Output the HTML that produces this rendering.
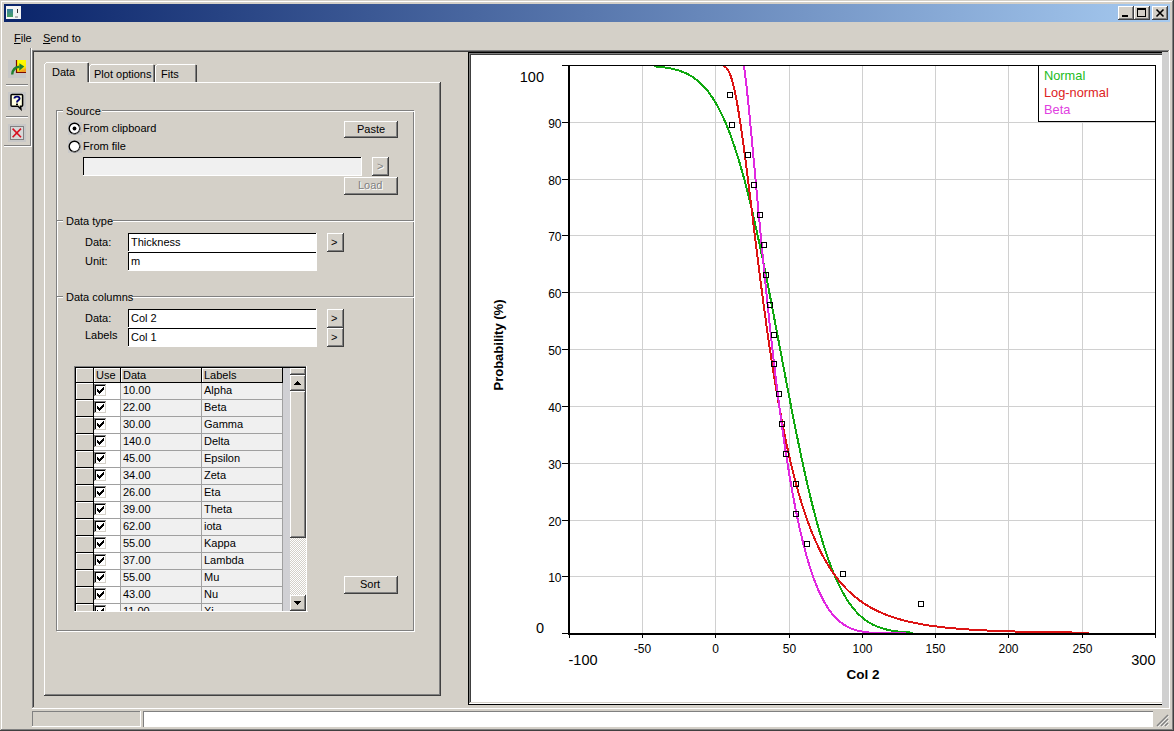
<!DOCTYPE html>
<html><head><meta charset="utf-8"><style>
html,body{margin:0;padding:0;width:1174px;height:731px;overflow:hidden;background:#D4D0C8;}
body{position:relative;font-family:"Liberation Sans",sans-serif;}
div,svg,span{position:absolute;}
svg{overflow:visible;}
.t{white-space:nowrap;line-height:0;height:0;display:block;}
u{text-decoration:underline;}
</style></head><body>
<div style="left:0px;top:0px;width:1174px;height:731px;background:#D4D0C8;"></div>
<div style="left:1px;top:1px;width:1172px;height:1px;background:#FFFFFF;"></div>
<div style="left:1px;top:1px;width:1px;height:729px;background:#FFFFFF;"></div>
<div style="left:0px;top:730px;width:1174px;height:1px;background:#404040;"></div>
<div style="left:1173px;top:0px;width:1px;height:731px;background:#404040;"></div>
<div style="left:1px;top:729px;width:1172px;height:1px;background:#808080;"></div>
<div style="left:1172px;top:1px;width:1px;height:729px;background:#808080;"></div>
<div style="left:4px;top:4px;width:1166px;height:18px;background:linear-gradient(to right,#0A246A,#A6CAF0);"></div>
<div style="left:6px;top:6px;width:15px;height:13px;background:#F4F4F4;"></div>
<div style="left:7px;top:9px;width:6px;height:8px;background:#3D8F7A;background:linear-gradient(#3a7fa0,#48a060);"></div>
<div style="left:15px;top:16px;width:3px;height:2px;background:#B8B8B8;"></div>
<div style="left:17px;top:9px;width:1px;height:4px;background:#303030;"></div>
<div style="left:1118px;top:6px;width:16px;height:14px;background:#D4D0C8;"></div>
<div style="left:1118px;top:19px;width:16px;height:1px;background:#404040;"></div>
<div style="left:1133px;top:6px;width:1px;height:14px;background:#404040;"></div>
<div style="left:1118px;top:6px;width:15px;height:1px;background:#FFFFFF;"></div>
<div style="left:1118px;top:6px;width:1px;height:13px;background:#FFFFFF;"></div>
<div style="left:1119px;top:18px;width:14px;height:1px;background:#808080;"></div>
<div style="left:1132px;top:7px;width:1px;height:12px;background:#808080;"></div>
<div style="left:1134px;top:6px;width:16px;height:14px;background:#D4D0C8;"></div>
<div style="left:1134px;top:19px;width:16px;height:1px;background:#404040;"></div>
<div style="left:1149px;top:6px;width:1px;height:14px;background:#404040;"></div>
<div style="left:1134px;top:6px;width:15px;height:1px;background:#FFFFFF;"></div>
<div style="left:1134px;top:6px;width:1px;height:13px;background:#FFFFFF;"></div>
<div style="left:1135px;top:18px;width:14px;height:1px;background:#808080;"></div>
<div style="left:1148px;top:7px;width:1px;height:12px;background:#808080;"></div>
<div style="left:1152px;top:6px;width:16px;height:14px;background:#D4D0C8;"></div>
<div style="left:1152px;top:19px;width:16px;height:1px;background:#404040;"></div>
<div style="left:1167px;top:6px;width:1px;height:14px;background:#404040;"></div>
<div style="left:1152px;top:6px;width:15px;height:1px;background:#FFFFFF;"></div>
<div style="left:1152px;top:6px;width:1px;height:13px;background:#FFFFFF;"></div>
<div style="left:1153px;top:18px;width:14px;height:1px;background:#808080;"></div>
<div style="left:1166px;top:7px;width:1px;height:12px;background:#808080;"></div>
<div style="left:1122px;top:15px;width:6px;height:2px;background:#000;"></div>
<div style="left:1137px;top:8px;width:9px;height:9px;background:transparent;border:1px solid #000;border-top-width:2px;box-sizing:border-box;"></div>
<svg style="left:1152px;top:6px" width="16" height="14"><path d="M4.5 3.5 L11.5 10.5 M11.5 3.5 L4.5 10.5" stroke="#000" stroke-width="1.6"/></svg>
<span class="t" style="left:14px;top:38.19px;font-size:11px;color:#000;font-weight:normal;"><u>F</u>ile</span>
<span class="t" style="left:43px;top:38.19px;font-size:11px;color:#000;font-weight:normal;"><u>S</u>end to</span>
<div style="left:30px;top:48px;width:1px;height:98px;background:#808080;"></div>
<div style="left:31px;top:48px;width:1px;height:99px;background:#FFFFFF;"></div>
<div style="left:4px;top:145px;width:27px;height:1px;background:#808080;"></div>
<div style="left:4px;top:146px;width:28px;height:1px;background:#FFFFFF;"></div>
<div style="left:8px;top:60px;width:18px;height:18px;background:#C8C8C8;"></div>
<div style="left:8px;top:92px;width:18px;height:18px;background:#C8C8C8;"></div>
<div style="left:8px;top:124px;width:18px;height:18px;background:#C8C8C8;"></div>
<div style="left:6px;top:84px;width:22px;height:1px;background:#808080;"></div>
<div style="left:6px;top:85px;width:22px;height:1px;background:#FFFFFF;"></div>
<div style="left:6px;top:116px;width:22px;height:1px;background:#808080;"></div>
<div style="left:6px;top:117px;width:22px;height:1px;background:#FFFFFF;"></div>
<svg style="left:8px;top:60px" width="18" height="18"><defs><linearGradient id="yg" x1="0" y1="0" x2="0.3" y2="1"><stop offset="0" stop-color="#FFFF00"/><stop offset="0.75" stop-color="#FFF000"/><stop offset="1" stop-color="#F0A020"/></linearGradient></defs><rect x="9" y="0" width="9" height="12" fill="url(#yg)"/><path d="M8.5 0 V12.5 H18" stroke="#7A0A00" stroke-width="1.2" fill="none"/><path d="M4.2 14.5 C4.5 10.5 6.5 7.2 11.5 6.8" stroke="#208030" stroke-width="2.4" fill="none"/><path d="M11.4 3.2 L16.3 6.6 L11.2 10.8 Z" fill="#208030"/></svg>
<svg style="left:8px;top:92px" width="18" height="18"><path d="M4 2.6 H13.6 Q14.6 2.6 14.6 3.6 V13.2 Q14.6 14.2 13.6 14.2 H12.5 L12.9 17.2 L10 14.2 H4 Q3 14.2 3 13.2 V3.6 Q3 2.6 4 2.6 Z" fill="#FFFFE0" stroke="#000" stroke-width="1.5"/><path d="M6.4 6.6 Q6.4 4.6 9 4.6 Q11.6 4.6 11.6 6.6 Q11.6 7.8 10 8.6 Q9 9.2 9 10.4" stroke="#000070" stroke-width="1.9" fill="none"/><rect x="8" y="11.6" width="2" height="1.6" fill="#000"/></svg>
<svg style="left:8px;top:124px" width="18" height="18"><rect x="2.5" y="2.5" width="13" height="13" fill="#D8D8D8" stroke="#808080" stroke-width="1"/><path d="M4.6 4.6 L13 13.2 M13 4.6 L4.6 13.2" stroke="#D81020" stroke-width="1.6"/></svg>
<div style="left:32px;top:50px;width:1138px;height:1px;background:#808080;"></div>
<div style="left:32px;top:50px;width:1px;height:659px;background:#808080;"></div>
<div style="left:32px;top:708px;width:1138px;height:1px;background:#FFFFFF;"></div>
<div style="left:1169px;top:50px;width:1px;height:659px;background:#FFFFFF;"></div>
<div style="left:33px;top:51px;width:1136px;height:1px;background:#404040;"></div>
<div style="left:33px;top:51px;width:1px;height:657px;background:#404040;"></div>
<div style="left:33px;top:707px;width:1136px;height:1px;background:#D4D0C8;"></div>
<div style="left:1168px;top:51px;width:1px;height:657px;background:#D4D0C8;"></div>
<div style="left:44px;top:82px;width:397px;height:1px;background:#FFFFFF;"></div>
<div style="left:44px;top:82px;width:1px;height:614px;background:#FFFFFF;"></div>
<div style="left:44px;top:695px;width:397px;height:1px;background:#404040;"></div>
<div style="left:440px;top:82px;width:1px;height:614px;background:#404040;"></div>
<div style="left:45px;top:694px;width:395px;height:1px;background:#808080;"></div>
<div style="left:439px;top:83px;width:1px;height:612px;background:#808080;"></div>
<div style="left:89px;top:64px;width:66px;height:18px;background:#D4D0C8;"></div>
<div style="left:91px;top:64px;width:62px;height:1px;background:#FFFFFF;"></div>
<div style="left:89px;top:66px;width:1px;height:17px;background:#FFFFFF;"></div>
<div style="left:90px;top:65px;width:1px;height:1px;background:#FFFFFF;"></div>
<div style="left:154px;top:65px;width:1px;height:17px;background:#404040;"></div>
<div style="left:153px;top:65px;width:1px;height:17px;background:#808080;"></div>
<span class="t" style="left:94px;top:74.19px;font-size:11px;color:#000;font-weight:normal;">Plot options</span>
<div style="left:155px;top:64px;width:42px;height:18px;background:#D4D0C8;"></div>
<div style="left:157px;top:64px;width:38px;height:1px;background:#FFFFFF;"></div>
<div style="left:155px;top:66px;width:1px;height:17px;background:#FFFFFF;"></div>
<div style="left:156px;top:65px;width:1px;height:1px;background:#FFFFFF;"></div>
<div style="left:196px;top:65px;width:1px;height:17px;background:#404040;"></div>
<div style="left:195px;top:65px;width:1px;height:17px;background:#808080;"></div>
<span class="t" style="left:161px;top:74.19px;font-size:11px;color:#000;font-weight:normal;">Fits</span>
<div style="left:44px;top:62px;width:45px;height:21px;background:#D4D0C8;"></div>
<div style="left:46px;top:62px;width:42px;height:1px;background:#FFFFFF;"></div>
<div style="left:44px;top:64px;width:1px;height:20px;background:#FFFFFF;"></div>
<div style="left:45px;top:63px;width:1px;height:1px;background:#FFFFFF;"></div>
<div style="left:88px;top:63px;width:1px;height:19px;background:#404040;"></div>
<div style="left:87px;top:63px;width:1px;height:19px;background:#808080;"></div>
<span class="t" style="left:52px;top:72.19px;font-size:11px;color:#000;font-weight:normal;">Data</span>
<div style="left:56px;top:110px;width:1px;height:521px;background:#808080;"></div>
<div style="left:57px;top:111px;width:1px;height:521px;background:#FFFFFF;"></div>
<div style="left:413px;top:110px;width:1px;height:521px;background:#808080;"></div>
<div style="left:414px;top:111px;width:1px;height:521px;background:#FFFFFF;"></div>
<div style="left:56px;top:110px;width:358px;height:1px;background:#808080;"></div>
<div style="left:57px;top:111px;width:358px;height:1px;background:#FFFFFF;"></div>
<div style="left:56px;top:630px;width:358px;height:1px;background:#808080;"></div>
<div style="left:57px;top:631px;width:358px;height:1px;background:#FFFFFF;"></div>
<div style="left:56px;top:220px;width:358px;height:1px;background:#808080;"></div>
<div style="left:57px;top:221px;width:358px;height:1px;background:#FFFFFF;"></div>
<div style="left:56px;top:296px;width:358px;height:1px;background:#808080;"></div>
<div style="left:57px;top:297px;width:358px;height:1px;background:#FFFFFF;"></div>
<div style="left:63px;top:105px;width:39px;height:13px;background:#D4D0C8;"></div>
<span class="t" style="left:66px;top:111.19px;font-size:11px;color:#000;font-weight:normal;">Source</span>
<div style="left:63px;top:215px;width:50px;height:13px;background:#D4D0C8;"></div>
<span class="t" style="left:66px;top:221.19px;font-size:11px;color:#000;font-weight:normal;">Data type</span>
<div style="left:63px;top:291px;width:69px;height:13px;background:#D4D0C8;"></div>
<span class="t" style="left:66px;top:297.19px;font-size:11px;color:#000;font-weight:normal;">Data columns</span>
<div style="left:68px;top:122px;width:14px;height:13px;background:#C8C8C8;"></div>
<svg style="left:68px;top:122px" width="14" height="14"><circle cx="6.5" cy="6.5" r="5.3" fill="#fff" stroke="#000" stroke-width="1.4"/><path d="M11.6 4.2 A5.5 5.5 0 0 1 4.2 11.6" stroke="#909090" stroke-width="0.9" fill="none"/><circle cx="6.5" cy="6.5" r="1.9" fill="#000"/></svg>
<span class="t" style="left:83px;top:128.19px;font-size:11px;color:#000;font-weight:normal;">From clipboard</span>
<div style="left:68px;top:140px;width:14px;height:13px;background:#C8C8C8;"></div>
<svg style="left:68px;top:140px" width="14" height="14"><circle cx="6.5" cy="6.5" r="5.3" fill="#fff" stroke="#000" stroke-width="1.4"/><path d="M11.6 4.2 A5.5 5.5 0 0 1 4.2 11.6" stroke="#909090" stroke-width="0.9" fill="none"/></svg>
<span class="t" style="left:83px;top:146.19px;font-size:11px;color:#000;font-weight:normal;">From file</span>
<div style="left:344px;top:121px;width:54px;height:17px;background:#D4D0C8;"></div>
<div style="left:344px;top:137px;width:54px;height:1px;background:#404040;"></div>
<div style="left:397px;top:121px;width:1px;height:17px;background:#404040;"></div>
<div style="left:344px;top:121px;width:53px;height:1px;background:#FFFFFF;"></div>
<div style="left:344px;top:121px;width:1px;height:16px;background:#FFFFFF;"></div>
<div style="left:345px;top:136px;width:52px;height:1px;background:#808080;"></div>
<div style="left:396px;top:122px;width:1px;height:15px;background:#808080;"></div>
<span class="t" style="left:357px;top:129.19px;font-size:11px;color:#000;font-weight:normal;">Paste</span>
<div style="left:83px;top:157px;width:279px;height:19px;background:#F0F0F0;"></div>
<div style="left:83px;top:157px;width:279px;height:1px;background:#000;"></div>
<div style="left:83px;top:157px;width:1px;height:19px;background:#000;"></div>
<div style="left:83px;top:175px;width:279px;height:1px;background:#FFFFFF;"></div>
<div style="left:361px;top:157px;width:1px;height:19px;background:#FFFFFF;"></div>
<div style="left:372px;top:157px;width:17px;height:19px;background:#D4D0C8;"></div>
<div style="left:372px;top:175px;width:17px;height:1px;background:#404040;"></div>
<div style="left:388px;top:157px;width:1px;height:19px;background:#404040;"></div>
<div style="left:372px;top:157px;width:16px;height:1px;background:#FFFFFF;"></div>
<div style="left:372px;top:157px;width:1px;height:18px;background:#FFFFFF;"></div>
<div style="left:373px;top:174px;width:15px;height:1px;background:#808080;"></div>
<div style="left:387px;top:158px;width:1px;height:17px;background:#808080;"></div>
<span class="t" style="left:378px;top:167.19px;font-size:11px;color:#FFFFFF;font-weight:normal;">&gt;</span>
<span class="t" style="left:377px;top:166.19px;font-size:11px;color:#808080;font-weight:normal;">&gt;</span>
<div style="left:344px;top:177px;width:54px;height:18px;background:#D4D0C8;"></div>
<div style="left:344px;top:194px;width:54px;height:1px;background:#404040;"></div>
<div style="left:397px;top:177px;width:1px;height:18px;background:#404040;"></div>
<div style="left:344px;top:177px;width:53px;height:1px;background:#FFFFFF;"></div>
<div style="left:344px;top:177px;width:1px;height:17px;background:#FFFFFF;"></div>
<div style="left:345px;top:193px;width:52px;height:1px;background:#808080;"></div>
<div style="left:396px;top:178px;width:1px;height:16px;background:#808080;"></div>
<span class="t" style="left:359px;top:186.19px;font-size:11px;color:#FFFFFF;font-weight:normal;">Load</span>
<span class="t" style="left:358px;top:185.19px;font-size:11px;color:#808080;font-weight:normal;">Load</span>
<span class="t" style="left:85px;top:242.19px;font-size:11px;color:#000;font-weight:normal;">Data:</span>
<span class="t" style="left:85px;top:261.19px;font-size:11px;color:#000;font-weight:normal;">Unit:</span>
<div style="left:128px;top:233px;width:189px;height:19px;background:#FFFFFF;"></div>
<div style="left:128px;top:233px;width:188px;height:1px;background:#000;"></div>
<div style="left:128px;top:233px;width:1px;height:18px;background:#000;"></div>
<span class="t" style="left:131px;top:242.19px;font-size:11px;color:#000;font-weight:normal;">Thickness</span>
<div style="left:128px;top:252px;width:189px;height:19px;background:#FFFFFF;"></div>
<div style="left:128px;top:252px;width:188px;height:1px;background:#000;"></div>
<div style="left:128px;top:252px;width:1px;height:18px;background:#000;"></div>
<span class="t" style="left:131px;top:261.19px;font-size:11px;color:#000;font-weight:normal;">m</span>
<div style="left:327px;top:233px;width:17px;height:19px;background:#D4D0C8;"></div>
<div style="left:327px;top:251px;width:17px;height:1px;background:#404040;"></div>
<div style="left:343px;top:233px;width:1px;height:19px;background:#404040;"></div>
<div style="left:327px;top:233px;width:16px;height:1px;background:#FFFFFF;"></div>
<div style="left:327px;top:233px;width:1px;height:18px;background:#FFFFFF;"></div>
<div style="left:328px;top:250px;width:15px;height:1px;background:#808080;"></div>
<div style="left:342px;top:234px;width:1px;height:17px;background:#808080;"></div>
<span class="t" style="left:331px;top:242.19px;font-size:11px;color:#000;font-weight:normal;">&gt;</span>
<span class="t" style="left:85px;top:318.19px;font-size:11px;color:#000;font-weight:normal;">Data:</span>
<span class="t" style="left:85px;top:335.19px;font-size:11px;color:#000;font-weight:normal;">Labels</span>
<div style="left:128px;top:309px;width:189px;height:19px;background:#FFFFFF;"></div>
<div style="left:128px;top:309px;width:188px;height:1px;background:#000;"></div>
<div style="left:128px;top:309px;width:1px;height:18px;background:#000;"></div>
<span class="t" style="left:131px;top:318.19px;font-size:11px;color:#000;font-weight:normal;">Col 2</span>
<div style="left:128px;top:328px;width:189px;height:19px;background:#FFFFFF;"></div>
<div style="left:128px;top:328px;width:188px;height:1px;background:#000;"></div>
<div style="left:128px;top:328px;width:1px;height:18px;background:#000;"></div>
<span class="t" style="left:131px;top:337.19px;font-size:11px;color:#000;font-weight:normal;">Col 1</span>
<div style="left:327px;top:309px;width:17px;height:19px;background:#D4D0C8;"></div>
<div style="left:327px;top:327px;width:17px;height:1px;background:#404040;"></div>
<div style="left:343px;top:309px;width:1px;height:19px;background:#404040;"></div>
<div style="left:327px;top:309px;width:16px;height:1px;background:#FFFFFF;"></div>
<div style="left:327px;top:309px;width:1px;height:18px;background:#FFFFFF;"></div>
<div style="left:328px;top:326px;width:15px;height:1px;background:#808080;"></div>
<div style="left:342px;top:310px;width:1px;height:17px;background:#808080;"></div>
<span class="t" style="left:331px;top:318.19px;font-size:11px;color:#000;font-weight:normal;">&gt;</span>
<div style="left:327px;top:328px;width:17px;height:19px;background:#D4D0C8;"></div>
<div style="left:327px;top:346px;width:17px;height:1px;background:#404040;"></div>
<div style="left:343px;top:328px;width:1px;height:19px;background:#404040;"></div>
<div style="left:327px;top:328px;width:16px;height:1px;background:#FFFFFF;"></div>
<div style="left:327px;top:328px;width:1px;height:18px;background:#FFFFFF;"></div>
<div style="left:328px;top:345px;width:15px;height:1px;background:#808080;"></div>
<div style="left:342px;top:329px;width:1px;height:17px;background:#808080;"></div>
<span class="t" style="left:331px;top:337.19px;font-size:11px;color:#000;font-weight:normal;">&gt;</span>
<div style="left:344px;top:576px;width:54px;height:18px;background:#D4D0C8;"></div>
<div style="left:344px;top:593px;width:54px;height:1px;background:#404040;"></div>
<div style="left:397px;top:576px;width:1px;height:18px;background:#404040;"></div>
<div style="left:344px;top:576px;width:53px;height:1px;background:#FFFFFF;"></div>
<div style="left:344px;top:576px;width:1px;height:17px;background:#FFFFFF;"></div>
<div style="left:345px;top:592px;width:52px;height:1px;background:#808080;"></div>
<div style="left:396px;top:577px;width:1px;height:16px;background:#808080;"></div>
<span class="t" style="left:360px;top:584.19px;font-size:11px;color:#000;font-weight:normal;">Sort</span>
<div style="left:74px;top:366px;width:233px;height:1px;background:#808080;"></div>
<div style="left:74px;top:366px;width:1px;height:246px;background:#808080;"></div>
<div style="left:75px;top:367px;width:231px;height:1px;background:#000;"></div>
<div style="left:75px;top:367px;width:1px;height:244px;background:#000;"></div>
<div style="left:74px;top:611px;width:234px;height:1px;background:#FFFFFF;"></div>
<div style="left:306px;top:366px;width:1px;height:246px;background:#FFFFFF;"></div>
<div style="left:76px;top:368px;width:207px;height:243px;background:#F0F0F0;"></div>
<div style="left:76px;top:368px;width:17px;height:14px;background:#D4D0C8;"></div>
<div style="left:94px;top:368px;width:26px;height:14px;background:#D4D0C8;"></div>
<div style="left:121px;top:368px;width:80px;height:14px;background:#D4D0C8;"></div>
<div style="left:202px;top:368px;width:80px;height:14px;background:#D4D0C8;"></div>
<div style="left:76px;top:382px;width:207px;height:1px;background:#000;"></div>
<div style="left:93px;top:368px;width:1px;height:243px;background:#000;"></div>
<div style="left:120px;top:368px;width:1px;height:15px;background:#000;"></div>
<div style="left:201px;top:368px;width:1px;height:15px;background:#000;"></div>
<div style="left:282px;top:368px;width:1px;height:15px;background:#000;"></div>
<div style="left:120px;top:383px;width:1px;height:228px;background:#A0A0A0;"></div>
<div style="left:201px;top:383px;width:1px;height:228px;background:#A0A0A0;"></div>
<div style="left:282px;top:383px;width:1px;height:228px;background:#A0A0A0;"></div>
<span class="t" style="left:96px;top:375.19px;font-size:11px;color:#000;font-weight:normal;">Use</span>
<span class="t" style="left:123px;top:375.19px;font-size:11px;color:#000;font-weight:normal;">Data</span>
<span class="t" style="left:204px;top:375.19px;font-size:11px;color:#000;font-weight:normal;">Labels</span>
<div style="left:94px;top:368px;width:26px;height:1px;background:#FFFFFF;"></div>
<div style="left:121px;top:368px;width:80px;height:1px;background:#FFFFFF;"></div>
<div style="left:202px;top:368px;width:80px;height:1px;background:#FFFFFF;"></div>
<div style="left:76px;top:368px;width:17px;height:1px;background:#FFFFFF;"></div>
<div style="left:94px;top:368px;width:1px;height:14px;background:#FFFFFF;"></div>
<div style="left:121px;top:368px;width:1px;height:14px;background:#FFFFFF;"></div>
<div style="left:202px;top:368px;width:1px;height:14px;background:#FFFFFF;"></div>
<div style="left:76px;top:368px;width:1px;height:14px;background:#FFFFFF;"></div>
<div style="left:76px;top:383px;width:215px;height:228px;overflow:hidden;">
<div style="left:0;top:0px;width:17px;height:16px;background:#D4D0C8;border-left:1px solid #fff;border-top:1px solid #fff;box-sizing:border-box;"></div>
<div style="left:0;top:16px;width:17px;height:1px;background:#000;"></div>
<div style="left:18px;top:0px;width:26px;height:16px;background:#fff;"></div>
<div style="left:18px;top:16px;width:189px;height:1px;background:#A0A0A0;"></div>
<svg style="left:18px;top:1px" width="14" height="14" shape-rendering="crispEdges"><rect x="2" y="2" width="9" height="9" fill="#fff"/><path d="M0.5 12 V0.5 H12" stroke="#808080" stroke-width="1" fill="none"/><path d="M1.5 11 V1.5 H11" stroke="#000" stroke-width="1" fill="none"/><path d="M1 11.5 H11.5 V1" stroke="#D4D0C8" stroke-width="1" fill="none"/><path d="M9 3h1v1h-1z M8 4h2v1h-2z M3 5h1v1h-1z M7 5h3v1h-3z M3 6h2v1h-2z M6 6h3v1h-3z M3 7h5v1h-5z M4 8h3v1h-3z M5 9h1v1h-1z" fill="#000"/></svg>
<span class="t" style="left:47px;top:7.19px;font-size:11px;color:#000;font-weight:normal;">10.00</span>
<span class="t" style="left:128px;top:7.19px;font-size:11px;color:#000;font-weight:normal;">Alpha</span>
<div style="left:0;top:17px;width:17px;height:16px;background:#D4D0C8;border-left:1px solid #fff;border-top:1px solid #fff;box-sizing:border-box;"></div>
<div style="left:0;top:33px;width:17px;height:1px;background:#000;"></div>
<div style="left:18px;top:17px;width:26px;height:16px;background:#fff;"></div>
<div style="left:18px;top:33px;width:189px;height:1px;background:#A0A0A0;"></div>
<svg style="left:18px;top:18px" width="14" height="14" shape-rendering="crispEdges"><rect x="2" y="2" width="9" height="9" fill="#fff"/><path d="M0.5 12 V0.5 H12" stroke="#808080" stroke-width="1" fill="none"/><path d="M1.5 11 V1.5 H11" stroke="#000" stroke-width="1" fill="none"/><path d="M1 11.5 H11.5 V1" stroke="#D4D0C8" stroke-width="1" fill="none"/><path d="M9 3h1v1h-1z M8 4h2v1h-2z M3 5h1v1h-1z M7 5h3v1h-3z M3 6h2v1h-2z M6 6h3v1h-3z M3 7h5v1h-5z M4 8h3v1h-3z M5 9h1v1h-1z" fill="#000"/></svg>
<span class="t" style="left:47px;top:24.19px;font-size:11px;color:#000;font-weight:normal;">22.00</span>
<span class="t" style="left:128px;top:24.19px;font-size:11px;color:#000;font-weight:normal;">Beta</span>
<div style="left:0;top:34px;width:17px;height:16px;background:#D4D0C8;border-left:1px solid #fff;border-top:1px solid #fff;box-sizing:border-box;"></div>
<div style="left:0;top:50px;width:17px;height:1px;background:#000;"></div>
<div style="left:18px;top:34px;width:26px;height:16px;background:#fff;"></div>
<div style="left:18px;top:50px;width:189px;height:1px;background:#A0A0A0;"></div>
<svg style="left:18px;top:35px" width="14" height="14" shape-rendering="crispEdges"><rect x="2" y="2" width="9" height="9" fill="#fff"/><path d="M0.5 12 V0.5 H12" stroke="#808080" stroke-width="1" fill="none"/><path d="M1.5 11 V1.5 H11" stroke="#000" stroke-width="1" fill="none"/><path d="M1 11.5 H11.5 V1" stroke="#D4D0C8" stroke-width="1" fill="none"/><path d="M9 3h1v1h-1z M8 4h2v1h-2z M3 5h1v1h-1z M7 5h3v1h-3z M3 6h2v1h-2z M6 6h3v1h-3z M3 7h5v1h-5z M4 8h3v1h-3z M5 9h1v1h-1z" fill="#000"/></svg>
<span class="t" style="left:47px;top:41.19px;font-size:11px;color:#000;font-weight:normal;">30.00</span>
<span class="t" style="left:128px;top:41.19px;font-size:11px;color:#000;font-weight:normal;">Gamma</span>
<div style="left:0;top:51px;width:17px;height:16px;background:#D4D0C8;border-left:1px solid #fff;border-top:1px solid #fff;box-sizing:border-box;"></div>
<div style="left:0;top:67px;width:17px;height:1px;background:#000;"></div>
<div style="left:18px;top:51px;width:26px;height:16px;background:#fff;"></div>
<div style="left:18px;top:67px;width:189px;height:1px;background:#A0A0A0;"></div>
<svg style="left:18px;top:52px" width="14" height="14" shape-rendering="crispEdges"><rect x="2" y="2" width="9" height="9" fill="#fff"/><path d="M0.5 12 V0.5 H12" stroke="#808080" stroke-width="1" fill="none"/><path d="M1.5 11 V1.5 H11" stroke="#000" stroke-width="1" fill="none"/><path d="M1 11.5 H11.5 V1" stroke="#D4D0C8" stroke-width="1" fill="none"/><path d="M9 3h1v1h-1z M8 4h2v1h-2z M3 5h1v1h-1z M7 5h3v1h-3z M3 6h2v1h-2z M6 6h3v1h-3z M3 7h5v1h-5z M4 8h3v1h-3z M5 9h1v1h-1z" fill="#000"/></svg>
<span class="t" style="left:47px;top:58.19px;font-size:11px;color:#000;font-weight:normal;">140.0</span>
<span class="t" style="left:128px;top:58.19px;font-size:11px;color:#000;font-weight:normal;">Delta</span>
<div style="left:0;top:68px;width:17px;height:16px;background:#D4D0C8;border-left:1px solid #fff;border-top:1px solid #fff;box-sizing:border-box;"></div>
<div style="left:0;top:84px;width:17px;height:1px;background:#000;"></div>
<div style="left:18px;top:68px;width:26px;height:16px;background:#fff;"></div>
<div style="left:18px;top:84px;width:189px;height:1px;background:#A0A0A0;"></div>
<svg style="left:18px;top:69px" width="14" height="14" shape-rendering="crispEdges"><rect x="2" y="2" width="9" height="9" fill="#fff"/><path d="M0.5 12 V0.5 H12" stroke="#808080" stroke-width="1" fill="none"/><path d="M1.5 11 V1.5 H11" stroke="#000" stroke-width="1" fill="none"/><path d="M1 11.5 H11.5 V1" stroke="#D4D0C8" stroke-width="1" fill="none"/><path d="M9 3h1v1h-1z M8 4h2v1h-2z M3 5h1v1h-1z M7 5h3v1h-3z M3 6h2v1h-2z M6 6h3v1h-3z M3 7h5v1h-5z M4 8h3v1h-3z M5 9h1v1h-1z" fill="#000"/></svg>
<span class="t" style="left:47px;top:75.19px;font-size:11px;color:#000;font-weight:normal;">45.00</span>
<span class="t" style="left:128px;top:75.19px;font-size:11px;color:#000;font-weight:normal;">Epsilon</span>
<div style="left:0;top:85px;width:17px;height:16px;background:#D4D0C8;border-left:1px solid #fff;border-top:1px solid #fff;box-sizing:border-box;"></div>
<div style="left:0;top:101px;width:17px;height:1px;background:#000;"></div>
<div style="left:18px;top:85px;width:26px;height:16px;background:#fff;"></div>
<div style="left:18px;top:101px;width:189px;height:1px;background:#A0A0A0;"></div>
<svg style="left:18px;top:86px" width="14" height="14" shape-rendering="crispEdges"><rect x="2" y="2" width="9" height="9" fill="#fff"/><path d="M0.5 12 V0.5 H12" stroke="#808080" stroke-width="1" fill="none"/><path d="M1.5 11 V1.5 H11" stroke="#000" stroke-width="1" fill="none"/><path d="M1 11.5 H11.5 V1" stroke="#D4D0C8" stroke-width="1" fill="none"/><path d="M9 3h1v1h-1z M8 4h2v1h-2z M3 5h1v1h-1z M7 5h3v1h-3z M3 6h2v1h-2z M6 6h3v1h-3z M3 7h5v1h-5z M4 8h3v1h-3z M5 9h1v1h-1z" fill="#000"/></svg>
<span class="t" style="left:47px;top:92.19px;font-size:11px;color:#000;font-weight:normal;">34.00</span>
<span class="t" style="left:128px;top:92.19px;font-size:11px;color:#000;font-weight:normal;">Zeta</span>
<div style="left:0;top:102px;width:17px;height:16px;background:#D4D0C8;border-left:1px solid #fff;border-top:1px solid #fff;box-sizing:border-box;"></div>
<div style="left:0;top:118px;width:17px;height:1px;background:#000;"></div>
<div style="left:18px;top:102px;width:26px;height:16px;background:#fff;"></div>
<div style="left:18px;top:118px;width:189px;height:1px;background:#A0A0A0;"></div>
<svg style="left:18px;top:103px" width="14" height="14" shape-rendering="crispEdges"><rect x="2" y="2" width="9" height="9" fill="#fff"/><path d="M0.5 12 V0.5 H12" stroke="#808080" stroke-width="1" fill="none"/><path d="M1.5 11 V1.5 H11" stroke="#000" stroke-width="1" fill="none"/><path d="M1 11.5 H11.5 V1" stroke="#D4D0C8" stroke-width="1" fill="none"/><path d="M9 3h1v1h-1z M8 4h2v1h-2z M3 5h1v1h-1z M7 5h3v1h-3z M3 6h2v1h-2z M6 6h3v1h-3z M3 7h5v1h-5z M4 8h3v1h-3z M5 9h1v1h-1z" fill="#000"/></svg>
<span class="t" style="left:47px;top:109.19px;font-size:11px;color:#000;font-weight:normal;">26.00</span>
<span class="t" style="left:128px;top:109.19px;font-size:11px;color:#000;font-weight:normal;">Eta</span>
<div style="left:0;top:119px;width:17px;height:16px;background:#D4D0C8;border-left:1px solid #fff;border-top:1px solid #fff;box-sizing:border-box;"></div>
<div style="left:0;top:135px;width:17px;height:1px;background:#000;"></div>
<div style="left:18px;top:119px;width:26px;height:16px;background:#fff;"></div>
<div style="left:18px;top:135px;width:189px;height:1px;background:#A0A0A0;"></div>
<svg style="left:18px;top:120px" width="14" height="14" shape-rendering="crispEdges"><rect x="2" y="2" width="9" height="9" fill="#fff"/><path d="M0.5 12 V0.5 H12" stroke="#808080" stroke-width="1" fill="none"/><path d="M1.5 11 V1.5 H11" stroke="#000" stroke-width="1" fill="none"/><path d="M1 11.5 H11.5 V1" stroke="#D4D0C8" stroke-width="1" fill="none"/><path d="M9 3h1v1h-1z M8 4h2v1h-2z M3 5h1v1h-1z M7 5h3v1h-3z M3 6h2v1h-2z M6 6h3v1h-3z M3 7h5v1h-5z M4 8h3v1h-3z M5 9h1v1h-1z" fill="#000"/></svg>
<span class="t" style="left:47px;top:126.19px;font-size:11px;color:#000;font-weight:normal;">39.00</span>
<span class="t" style="left:128px;top:126.19px;font-size:11px;color:#000;font-weight:normal;">Theta</span>
<div style="left:0;top:136px;width:17px;height:16px;background:#D4D0C8;border-left:1px solid #fff;border-top:1px solid #fff;box-sizing:border-box;"></div>
<div style="left:0;top:152px;width:17px;height:1px;background:#000;"></div>
<div style="left:18px;top:136px;width:26px;height:16px;background:#fff;"></div>
<div style="left:18px;top:152px;width:189px;height:1px;background:#A0A0A0;"></div>
<svg style="left:18px;top:137px" width="14" height="14" shape-rendering="crispEdges"><rect x="2" y="2" width="9" height="9" fill="#fff"/><path d="M0.5 12 V0.5 H12" stroke="#808080" stroke-width="1" fill="none"/><path d="M1.5 11 V1.5 H11" stroke="#000" stroke-width="1" fill="none"/><path d="M1 11.5 H11.5 V1" stroke="#D4D0C8" stroke-width="1" fill="none"/><path d="M9 3h1v1h-1z M8 4h2v1h-2z M3 5h1v1h-1z M7 5h3v1h-3z M3 6h2v1h-2z M6 6h3v1h-3z M3 7h5v1h-5z M4 8h3v1h-3z M5 9h1v1h-1z" fill="#000"/></svg>
<span class="t" style="left:47px;top:143.19px;font-size:11px;color:#000;font-weight:normal;">62.00</span>
<span class="t" style="left:128px;top:143.19px;font-size:11px;color:#000;font-weight:normal;">iota</span>
<div style="left:0;top:153px;width:17px;height:16px;background:#D4D0C8;border-left:1px solid #fff;border-top:1px solid #fff;box-sizing:border-box;"></div>
<div style="left:0;top:169px;width:17px;height:1px;background:#000;"></div>
<div style="left:18px;top:153px;width:26px;height:16px;background:#fff;"></div>
<div style="left:18px;top:169px;width:189px;height:1px;background:#A0A0A0;"></div>
<svg style="left:18px;top:154px" width="14" height="14" shape-rendering="crispEdges"><rect x="2" y="2" width="9" height="9" fill="#fff"/><path d="M0.5 12 V0.5 H12" stroke="#808080" stroke-width="1" fill="none"/><path d="M1.5 11 V1.5 H11" stroke="#000" stroke-width="1" fill="none"/><path d="M1 11.5 H11.5 V1" stroke="#D4D0C8" stroke-width="1" fill="none"/><path d="M9 3h1v1h-1z M8 4h2v1h-2z M3 5h1v1h-1z M7 5h3v1h-3z M3 6h2v1h-2z M6 6h3v1h-3z M3 7h5v1h-5z M4 8h3v1h-3z M5 9h1v1h-1z" fill="#000"/></svg>
<span class="t" style="left:47px;top:160.19px;font-size:11px;color:#000;font-weight:normal;">55.00</span>
<span class="t" style="left:128px;top:160.19px;font-size:11px;color:#000;font-weight:normal;">Kappa</span>
<div style="left:0;top:170px;width:17px;height:16px;background:#D4D0C8;border-left:1px solid #fff;border-top:1px solid #fff;box-sizing:border-box;"></div>
<div style="left:0;top:186px;width:17px;height:1px;background:#000;"></div>
<div style="left:18px;top:170px;width:26px;height:16px;background:#fff;"></div>
<div style="left:18px;top:186px;width:189px;height:1px;background:#A0A0A0;"></div>
<svg style="left:18px;top:171px" width="14" height="14" shape-rendering="crispEdges"><rect x="2" y="2" width="9" height="9" fill="#fff"/><path d="M0.5 12 V0.5 H12" stroke="#808080" stroke-width="1" fill="none"/><path d="M1.5 11 V1.5 H11" stroke="#000" stroke-width="1" fill="none"/><path d="M1 11.5 H11.5 V1" stroke="#D4D0C8" stroke-width="1" fill="none"/><path d="M9 3h1v1h-1z M8 4h2v1h-2z M3 5h1v1h-1z M7 5h3v1h-3z M3 6h2v1h-2z M6 6h3v1h-3z M3 7h5v1h-5z M4 8h3v1h-3z M5 9h1v1h-1z" fill="#000"/></svg>
<span class="t" style="left:47px;top:177.19px;font-size:11px;color:#000;font-weight:normal;">37.00</span>
<span class="t" style="left:128px;top:177.19px;font-size:11px;color:#000;font-weight:normal;">Lambda</span>
<div style="left:0;top:187px;width:17px;height:16px;background:#D4D0C8;border-left:1px solid #fff;border-top:1px solid #fff;box-sizing:border-box;"></div>
<div style="left:0;top:203px;width:17px;height:1px;background:#000;"></div>
<div style="left:18px;top:187px;width:26px;height:16px;background:#fff;"></div>
<div style="left:18px;top:203px;width:189px;height:1px;background:#A0A0A0;"></div>
<svg style="left:18px;top:188px" width="14" height="14" shape-rendering="crispEdges"><rect x="2" y="2" width="9" height="9" fill="#fff"/><path d="M0.5 12 V0.5 H12" stroke="#808080" stroke-width="1" fill="none"/><path d="M1.5 11 V1.5 H11" stroke="#000" stroke-width="1" fill="none"/><path d="M1 11.5 H11.5 V1" stroke="#D4D0C8" stroke-width="1" fill="none"/><path d="M9 3h1v1h-1z M8 4h2v1h-2z M3 5h1v1h-1z M7 5h3v1h-3z M3 6h2v1h-2z M6 6h3v1h-3z M3 7h5v1h-5z M4 8h3v1h-3z M5 9h1v1h-1z" fill="#000"/></svg>
<span class="t" style="left:47px;top:194.19px;font-size:11px;color:#000;font-weight:normal;">55.00</span>
<span class="t" style="left:128px;top:194.19px;font-size:11px;color:#000;font-weight:normal;">Mu</span>
<div style="left:0;top:204px;width:17px;height:16px;background:#D4D0C8;border-left:1px solid #fff;border-top:1px solid #fff;box-sizing:border-box;"></div>
<div style="left:0;top:220px;width:17px;height:1px;background:#000;"></div>
<div style="left:18px;top:204px;width:26px;height:16px;background:#fff;"></div>
<div style="left:18px;top:220px;width:189px;height:1px;background:#A0A0A0;"></div>
<svg style="left:18px;top:205px" width="14" height="14" shape-rendering="crispEdges"><rect x="2" y="2" width="9" height="9" fill="#fff"/><path d="M0.5 12 V0.5 H12" stroke="#808080" stroke-width="1" fill="none"/><path d="M1.5 11 V1.5 H11" stroke="#000" stroke-width="1" fill="none"/><path d="M1 11.5 H11.5 V1" stroke="#D4D0C8" stroke-width="1" fill="none"/><path d="M9 3h1v1h-1z M8 4h2v1h-2z M3 5h1v1h-1z M7 5h3v1h-3z M3 6h2v1h-2z M6 6h3v1h-3z M3 7h5v1h-5z M4 8h3v1h-3z M5 9h1v1h-1z" fill="#000"/></svg>
<span class="t" style="left:47px;top:211.19px;font-size:11px;color:#000;font-weight:normal;">43.00</span>
<span class="t" style="left:128px;top:211.19px;font-size:11px;color:#000;font-weight:normal;">Nu</span>
<div style="left:0;top:221px;width:17px;height:16px;background:#D4D0C8;border-left:1px solid #fff;border-top:1px solid #fff;box-sizing:border-box;"></div>
<div style="left:0;top:237px;width:17px;height:1px;background:#000;"></div>
<div style="left:18px;top:221px;width:26px;height:16px;background:#fff;"></div>
<div style="left:18px;top:237px;width:189px;height:1px;background:#A0A0A0;"></div>
<svg style="left:18px;top:222px" width="14" height="14" shape-rendering="crispEdges"><rect x="2" y="2" width="9" height="9" fill="#fff"/><path d="M0.5 12 V0.5 H12" stroke="#808080" stroke-width="1" fill="none"/><path d="M1.5 11 V1.5 H11" stroke="#000" stroke-width="1" fill="none"/><path d="M1 11.5 H11.5 V1" stroke="#D4D0C8" stroke-width="1" fill="none"/><path d="M9 3h1v1h-1z M8 4h2v1h-2z M3 5h1v1h-1z M7 5h3v1h-3z M3 6h2v1h-2z M6 6h3v1h-3z M3 7h5v1h-5z M4 8h3v1h-3z M5 9h1v1h-1z" fill="#000"/></svg>
<span class="t" style="left:47px;top:228.19px;font-size:11px;color:#000;font-weight:normal;">11.00</span>
<span class="t" style="left:128px;top:228.19px;font-size:11px;color:#000;font-weight:normal;">Xi</span>
</div>
<div style="left:283px;top:368px;width:7px;height:243px;background:#D0D0D4;"></div>
<div style="left:290px;top:368px;width:16px;height:7px;background:#D4D0C8;"></div>
<div style="left:290px;top:374px;width:16px;height:1px;background:#404040;"></div>
<div style="left:305px;top:368px;width:1px;height:7px;background:#404040;"></div>
<div style="left:290px;top:368px;width:15px;height:1px;background:#FFFFFF;"></div>
<div style="left:290px;top:368px;width:1px;height:6px;background:#FFFFFF;"></div>
<div style="left:291px;top:373px;width:14px;height:1px;background:#808080;"></div>
<div style="left:304px;top:369px;width:1px;height:5px;background:#808080;"></div>
<div style="left:290px;top:375px;width:16px;height:16px;background:#D4D0C8;"></div>
<div style="left:290px;top:390px;width:16px;height:1px;background:#404040;"></div>
<div style="left:305px;top:375px;width:1px;height:16px;background:#404040;"></div>
<div style="left:290px;top:375px;width:15px;height:1px;background:#FFFFFF;"></div>
<div style="left:290px;top:375px;width:1px;height:15px;background:#FFFFFF;"></div>
<div style="left:291px;top:389px;width:14px;height:1px;background:#808080;"></div>
<div style="left:304px;top:376px;width:1px;height:14px;background:#808080;"></div>
<svg style="left:290px;top:375px" width="16" height="16" shape-rendering="crispEdges"><path d="M7 6h1v1h-1z M6 7h3v1h-3z M5 8h5v1h-5z M4 9h7v1h-7z" fill="#000"/></svg>
<div style="left:290px;top:391px;width:16px;height:147px;background:#D4D0C8;"></div>
<div style="left:290px;top:537px;width:16px;height:1px;background:#404040;"></div>
<div style="left:305px;top:391px;width:1px;height:147px;background:#404040;"></div>
<div style="left:290px;top:391px;width:15px;height:1px;background:#FFFFFF;"></div>
<div style="left:290px;top:391px;width:1px;height:146px;background:#FFFFFF;"></div>
<div style="left:291px;top:536px;width:14px;height:1px;background:#808080;"></div>
<div style="left:304px;top:392px;width:1px;height:145px;background:#808080;"></div>
<div style="left:290px;top:538px;width:16px;height:57px;background-image:repeating-conic-gradient(#D4D0C8 0 25%,#FFFFFF 0 50%);background-size:2px 2px;"></div>
<div style="left:290px;top:595px;width:16px;height:16px;background:#D4D0C8;"></div>
<div style="left:290px;top:610px;width:16px;height:1px;background:#404040;"></div>
<div style="left:305px;top:595px;width:1px;height:16px;background:#404040;"></div>
<div style="left:290px;top:595px;width:15px;height:1px;background:#FFFFFF;"></div>
<div style="left:290px;top:595px;width:1px;height:15px;background:#FFFFFF;"></div>
<div style="left:291px;top:609px;width:14px;height:1px;background:#808080;"></div>
<div style="left:304px;top:596px;width:1px;height:14px;background:#808080;"></div>
<svg style="left:290px;top:595px" width="16" height="16" shape-rendering="crispEdges"><path d="M4 6h7v1h-7z M5 7h5v1h-5z M6 8h3v1h-3z M7 9h1v1h-1z" fill="#000"/></svg>
<div style="left:468px;top:52px;width:694px;height:653px;background:#FFFFFF;"></div>
<div style="left:468px;top:52px;width:694px;height:1px;background:#000;"></div>
<div style="left:468px;top:52px;width:1px;height:653px;background:#000;"></div>
<div style="left:468px;top:704px;width:694px;height:1px;background:#000;"></div>
<div style="left:469px;top:53px;width:693px;height:1px;background:#808080;"></div>
<div style="left:469px;top:53px;width:1px;height:651px;background:#808080;"></div>
<div style="left:470px;top:54px;width:692px;height:1px;background:#404040;"></div>
<div style="left:470px;top:54px;width:1px;height:649px;background:#404040;"></div>
<div style="left:470px;top:702px;width:692px;height:1px;background:#D4D0C8;"></div>
<div style="left:469px;top:703px;width:693px;height:1px;background:#FFFFFF;"></div>
<div style="left:1162px;top:52px;width:7px;height:655px;background:#D0D0D0;"></div>
<svg style="left:0;top:0" width="1174" height="731" shape-rendering="crispEdges">
<line x1="642.5" y1="66" x2="642.5" y2="633" stroke="#D0D0D0" stroke-width="1"/>
<line x1="642.5" y1="635" x2="642.5" y2="638" stroke="#000" stroke-width="1"/>
<line x1="715.5" y1="66" x2="715.5" y2="633" stroke="#D0D0D0" stroke-width="1"/>
<line x1="715.5" y1="635" x2="715.5" y2="638" stroke="#000" stroke-width="1"/>
<line x1="789.5" y1="66" x2="789.5" y2="633" stroke="#D0D0D0" stroke-width="1"/>
<line x1="789.5" y1="635" x2="789.5" y2="638" stroke="#000" stroke-width="1"/>
<line x1="862.5" y1="66" x2="862.5" y2="633" stroke="#D0D0D0" stroke-width="1"/>
<line x1="862.5" y1="635" x2="862.5" y2="638" stroke="#000" stroke-width="1"/>
<line x1="935.5" y1="66" x2="935.5" y2="633" stroke="#D0D0D0" stroke-width="1"/>
<line x1="935.5" y1="635" x2="935.5" y2="638" stroke="#000" stroke-width="1"/>
<line x1="1008.5" y1="66" x2="1008.5" y2="633" stroke="#D0D0D0" stroke-width="1"/>
<line x1="1008.5" y1="635" x2="1008.5" y2="638" stroke="#000" stroke-width="1"/>
<line x1="1082.5" y1="66" x2="1082.5" y2="633" stroke="#D0D0D0" stroke-width="1"/>
<line x1="1082.5" y1="635" x2="1082.5" y2="638" stroke="#000" stroke-width="1"/>
<line x1="570" y1="576.5" x2="1155" y2="576.5" stroke="#D0D0D0" stroke-width="1"/>
<line x1="562" y1="576.5" x2="568" y2="576.5" stroke="#000" stroke-width="1"/>
<line x1="570" y1="520.5" x2="1155" y2="520.5" stroke="#D0D0D0" stroke-width="1"/>
<line x1="562" y1="520.5" x2="568" y2="520.5" stroke="#000" stroke-width="1"/>
<line x1="570" y1="463.5" x2="1155" y2="463.5" stroke="#D0D0D0" stroke-width="1"/>
<line x1="562" y1="463.5" x2="568" y2="463.5" stroke="#000" stroke-width="1"/>
<line x1="570" y1="406.5" x2="1155" y2="406.5" stroke="#D0D0D0" stroke-width="1"/>
<line x1="562" y1="406.5" x2="568" y2="406.5" stroke="#000" stroke-width="1"/>
<line x1="570" y1="349.5" x2="1155" y2="349.5" stroke="#D0D0D0" stroke-width="1"/>
<line x1="562" y1="349.5" x2="568" y2="349.5" stroke="#000" stroke-width="1"/>
<line x1="570" y1="292.5" x2="1155" y2="292.5" stroke="#D0D0D0" stroke-width="1"/>
<line x1="562" y1="292.5" x2="568" y2="292.5" stroke="#000" stroke-width="1"/>
<line x1="570" y1="235.5" x2="1155" y2="235.5" stroke="#D0D0D0" stroke-width="1"/>
<line x1="562" y1="235.5" x2="568" y2="235.5" stroke="#000" stroke-width="1"/>
<line x1="570" y1="179.5" x2="1155" y2="179.5" stroke="#D0D0D0" stroke-width="1"/>
<line x1="562" y1="179.5" x2="568" y2="179.5" stroke="#000" stroke-width="1"/>
<line x1="570" y1="122.5" x2="1155" y2="122.5" stroke="#D0D0D0" stroke-width="1"/>
<line x1="562" y1="122.5" x2="568" y2="122.5" stroke="#000" stroke-width="1"/>
<line x1="569" y1="635" x2="569" y2="638" stroke="#000" stroke-width="1"/>
<line x1="1155.5" y1="635" x2="1155.5" y2="638" stroke="#000" stroke-width="1"/>
</svg>
<svg style="left:0;top:0" width="1174" height="731">
<defs><clipPath id="pc"><rect x="568" y="64" width="588" height="572"/></clipPath></defs>
<polyline points="653.95,66.35 655.03,66.43 656.12,66.51 657.20,66.60 658.28,66.70 659.37,66.80 660.45,66.91 661.53,67.03 662.61,67.15 663.70,67.29 664.78,67.44 665.86,67.59 666.95,67.76 668.03,67.94 669.11,68.13 670.20,68.33 671.28,68.55 672.36,68.78 673.45,69.03 674.53,69.30 675.61,69.58 676.70,69.88 677.78,70.19 678.86,70.53 679.95,70.89 681.03,71.27 682.11,71.67 683.20,72.10 684.28,72.55 685.36,73.03 686.44,73.54 687.53,74.07 688.61,74.64 689.69,75.23 690.78,75.86 691.86,76.53 692.94,77.23 694.03,77.96 695.11,78.74 696.19,79.55 697.28,80.41 698.36,81.31 699.44,82.25 700.53,83.24 701.61,84.28 702.69,85.37 703.78,86.50 704.86,87.70 705.94,88.94 707.03,90.24 708.11,91.60 709.19,93.02 710.27,94.50 711.36,96.04 712.44,97.64 713.52,99.31 714.61,101.05 715.69,102.86 716.77,104.74 717.86,106.69 718.94,108.71 720.02,110.80 721.11,112.98 722.19,115.23 723.27,117.55 724.36,119.96 725.44,122.45 726.52,125.02 727.61,127.68 728.69,130.41 729.77,133.23 730.86,136.14 731.94,139.14 733.02,142.22 734.10,145.38 735.19,148.64 736.27,151.98 737.35,155.41 738.44,158.93 739.52,162.54 740.60,166.23 741.69,170.01 742.77,173.88 743.85,177.84 744.94,181.88 746.02,186.01 747.10,190.22 748.19,194.51 749.27,198.89 750.35,203.34 751.44,207.88 752.52,212.50 753.60,217.19 754.69,221.95 755.77,226.79 756.85,231.69 757.93,236.67 759.02,241.71 760.10,246.82 761.18,251.98 762.27,257.21 763.35,262.49 764.43,267.82 765.52,273.20 766.60,278.63 767.68,284.10 768.77,289.62 769.85,295.17 770.93,300.75 772.02,306.37 773.10,312.01 774.18,317.68 775.27,323.37 776.35,329.07 777.43,334.79 778.51,340.51 779.60,346.25 780.68,351.98 781.76,357.71 782.85,363.44 783.93,369.15 785.01,374.86 786.10,380.55 787.18,386.22 788.26,391.86 789.35,397.48 790.43,403.07 791.51,408.62 792.60,414.14 793.68,419.61 794.76,425.05 795.85,430.43 796.93,435.77 798.01,441.05 799.10,446.28 800.18,451.45 801.26,456.56 802.34,461.61 803.43,466.59 804.51,471.50 805.59,476.34 806.68,481.11 807.76,485.81 808.84,490.43 809.93,494.97 811.01,499.43 812.09,503.82 813.18,508.12 814.26,512.33 815.34,516.47 816.43,520.51 817.51,524.48 818.59,528.35 819.68,532.14 820.76,535.84 821.84,539.45 822.93,542.98 824.01,546.42 825.09,549.77 826.17,553.03 827.26,556.20 828.34,559.29 829.42,562.29 830.51,565.20 831.59,568.03 832.67,570.77 833.76,573.43 834.84,576.01 835.92,578.51 837.01,580.92 838.09,583.25 839.17,585.51 840.26,587.69 841.34,589.79 842.42,591.82 843.51,593.77 844.59,595.65 845.67,597.47 846.76,599.21 847.84,600.88 848.92,602.49 850.00,604.04 851.09,605.52 852.17,606.95 853.25,608.31 854.34,609.61 855.42,610.86 856.50,612.06 857.59,613.20 858.67,614.29 859.75,615.33 860.84,616.33 861.92,617.27 863.00,618.18 864.09,619.04 865.17,619.85 866.25,620.63 867.34,621.37 868.42,622.07 869.50,622.74 870.59,623.37 871.67,623.97 872.75,624.54 873.83,625.08 874.92,625.58 876.00,626.06 877.08,626.52 878.17,626.95 879.25,627.35 880.33,627.73 881.42,628.09 882.50,628.43 883.58,628.75 884.67,629.05 885.75,629.33 886.83,629.60 887.92,629.85 889.00,630.08 890.08,630.30 891.17,630.50 892.25,630.70 893.33,630.88 894.41,631.04 895.50,631.20 896.58,631.35 897.66,631.49 898.75,631.61 899.83,631.73 900.91,631.84 902.00,631.95 903.08,632.04 904.16,632.13 905.25,632.22 906.33,632.29 907.41,632.36 908.50,632.43 909.58,632.49 910.66,632.55 911.75,632.60 912.83,632.65" fill="none" stroke="#10A810" stroke-width="2" clip-path="url(#pc)" shape-rendering="crispEdges"/>
<polyline points="723.64,65.98 723.74,66.02 723.83,66.06 723.93,66.10 724.03,66.14 724.13,66.19 724.23,66.23 724.33,66.29 724.44,66.34 724.54,66.40 724.65,66.46 724.76,66.52 724.87,66.59 724.98,66.67 725.09,66.74 725.20,66.82 725.32,66.91 725.43,67.00 725.55,67.10 725.67,67.20 725.79,67.30 725.91,67.42 726.04,67.53 726.16,67.66 726.29,67.79 726.41,67.93 726.54,68.07 726.67,68.23 726.81,68.39 726.94,68.56 727.08,68.73 727.21,68.92 727.35,69.12 727.49,69.32 727.64,69.54 727.78,69.77 727.93,70.00 728.07,70.25 728.22,70.51 728.38,70.79 728.53,71.07 728.68,71.37 728.84,71.68 729.00,72.01 729.16,72.35 729.32,72.71 729.49,73.08 729.66,73.47 729.82,73.88 730.00,74.31 730.17,74.75 730.34,75.21 730.52,75.69 730.70,76.19 730.88,76.71 731.07,77.26 731.25,77.82 731.44,78.41 731.63,79.02 731.82,79.66 732.02,80.32 732.22,81.00 732.42,81.71 732.62,82.45 732.82,83.22 733.03,84.01 733.24,84.84 733.45,85.69 733.67,86.57 733.89,87.49 734.11,88.43 734.33,89.41 734.56,90.43 734.78,91.47 735.02,92.56 735.25,93.68 735.49,94.83 735.73,96.02 735.97,97.25 736.21,98.52 736.46,99.83 736.72,101.18 736.97,102.57 737.23,104.00 737.49,105.47 737.75,106.99 738.02,108.55 738.29,110.15 738.57,111.80 738.84,113.49 739.12,115.23 739.41,117.02 739.70,118.85 739.99,120.74 740.28,122.67 740.58,124.64 740.88,126.67 741.19,128.75 741.50,130.87 741.81,133.05 742.13,135.28 742.45,137.56 742.77,139.89 743.10,142.27 743.43,144.70 743.77,147.19 744.11,149.72 744.46,152.31 744.81,154.95 745.16,157.65 745.52,160.39 745.88,163.19 746.25,166.04 746.62,168.94 746.99,171.90 747.37,174.90 747.76,177.96 748.15,181.07 748.54,184.23 748.94,187.43 749.34,190.69 749.75,194.00 750.17,197.36 750.59,200.76 751.01,204.21 751.44,207.71 751.87,211.26 752.31,214.85 752.76,218.48 753.21,222.16 753.66,225.88 754.13,229.65 754.59,233.45 755.07,237.30 755.54,241.18 756.03,245.10 756.52,249.06 757.01,253.05 757.52,257.08 758.02,261.14 758.54,265.24 759.06,269.36 759.59,273.51 760.12,277.69 760.66,281.90 761.21,286.13 761.76,290.39 762.32,294.66 762.89,298.96 763.46,303.27 764.04,307.61 764.63,311.96 765.23,316.32 765.83,320.70 766.44,325.08 767.05,329.48 767.68,333.88 768.31,338.29 768.95,342.70 769.60,347.12 770.25,351.53 770.92,355.95 771.59,360.36 772.27,364.77 772.96,369.17 773.65,373.57 774.36,377.95 775.07,382.33 775.80,386.69 776.53,391.04 777.27,395.38 778.02,399.69 778.77,403.99 779.54,408.26 780.32,412.52 781.10,416.75 781.90,420.96 782.71,425.14 783.52,429.29 784.35,433.41 785.18,437.51 786.03,441.57 786.88,445.60 787.75,449.59 788.63,453.55 789.51,457.47 790.41,461.35 791.32,465.20 792.24,469.00 793.17,472.77 794.12,476.49 795.07,480.17 796.04,483.80 797.01,487.39 798.00,490.94 799.00,494.44 800.02,497.89 801.05,501.29 802.08,504.65 803.14,507.96 804.20,511.22 805.28,514.42 806.37,517.58 807.47,520.69 808.59,523.75 809.72,526.75 810.86,529.71 812.02,532.61 813.19,535.46 814.38,538.26 815.58,541.00 816.80,543.70 818.03,546.34 819.27,548.93 820.54,551.46 821.81,553.95 823.10,556.38 824.41,558.76 825.74,561.09 827.07,563.37 828.43,565.60 829.80,567.78 831.19,569.90 832.60,571.98 834.02,574.01 835.46,575.98 836.92,577.91 838.40,579.80 839.89,581.63 841.40,583.42 842.93,585.16 844.48,586.85 846.05,588.50 847.64,590.10 849.25,591.66 850.87,593.18 852.52,594.65 854.18,596.08 855.87,597.47 857.58,598.82 859.30,600.13 861.05,601.40 862.82,602.63 864.61,603.82 866.43,604.97 868.26,606.09 870.12,607.18 872.00,608.22 873.91,609.24 875.83,610.22 877.78,611.16 879.76,612.08 881.75,612.96 883.78,613.81 885.82,614.64 887.90,615.43 889.99,616.20 892.12,616.94 894.26,617.65 896.44,618.33 898.64,618.99 900.87,619.63 903.12,620.24 905.41,620.83 907.72,621.39 910.06,621.94 912.42,622.46 914.82,622.96 917.24,623.44 919.70,623.90 922.18,624.34 924.70,624.77 927.24,625.18 929.82,625.57 932.43,625.94 935.07,626.30 937.74,626.64 940.45,626.97 943.18,627.28 945.95,627.58 948.76,627.86 951.60,628.14 954.47,628.40 957.38,628.65 960.32,628.88 963.30,629.11 966.32,629.33 969.37,629.53 972.46,629.73 975.59,629.92 978.76,630.09 981.96,630.26 985.20,630.42 988.49,630.58 991.81,630.72 995.17,630.86 998.58,630.99 1002.02,631.12 1005.51,631.23 1009.04,631.35 1012.62,631.45 1016.23,631.55 1019.89,631.65 1023.60,631.74 1027.35,631.83 1031.15,631.91 1034.99,631.98 1038.88,632.06 1042.82,632.13 1046.80,632.19 1050.84,632.25 1054.92,632.31 1059.05,632.36 1063.23,632.42 1067.47,632.46 1071.75,632.51 1076.09,632.55 1080.48,632.59 1084.92,632.63 1089.42,632.67" fill="none" stroke="#DC1414" stroke-width="2" clip-path="url(#pc)" shape-rendering="crispEdges"/>
<polyline points="743.56,65.45 743.84,66.47 744.12,67.95 744.40,69.67 744.68,71.56 744.97,73.58 745.25,75.71 745.53,77.94 745.81,80.25 746.09,82.63 746.37,85.08 746.65,87.58 746.93,90.13 747.21,92.74 747.49,95.38 747.77,98.06 748.05,100.78 748.33,103.52 748.61,106.30 748.89,109.11 749.17,111.94 749.45,114.79 749.73,117.66 750.01,120.56 750.29,123.47 750.57,126.39 750.86,129.33 751.14,132.29 751.42,135.25 751.70,138.23 752.47,146.52 753.25,154.86 754.03,163.24 754.80,171.63 755.58,180.03 756.36,188.43 757.13,196.81 757.91,205.16 758.69,213.48 759.46,221.75 760.24,229.97 761.01,238.14 761.79,246.25 762.57,254.29 763.34,262.26 764.12,270.16 764.90,277.97 765.67,285.71 766.45,293.36 767.23,300.92 768.00,308.39 768.78,315.77 769.56,323.06 770.33,330.25 771.11,337.34 771.89,344.34 772.66,351.24 773.44,358.03 774.22,364.73 774.99,371.32 775.77,377.81 776.55,384.19 777.32,390.48 778.10,396.66 778.88,402.73 779.65,408.71 780.43,414.58 781.20,420.34 781.98,426.01 782.76,431.57 783.53,437.02 784.31,442.38 785.09,447.63 785.86,452.79 786.64,457.84 787.42,462.79 788.19,467.65 788.97,472.41 789.75,477.07 790.52,481.63 791.30,486.09 792.08,490.47 792.85,494.74 793.63,498.93 794.41,503.02 795.18,507.02 795.96,510.93 796.74,514.76 797.51,518.49 798.29,522.14 799.07,525.70 799.84,529.18 800.62,532.57 801.39,535.88 802.17,539.12 802.95,542.27 803.72,545.34 804.50,548.33 805.28,551.25 806.05,554.09 806.83,556.85 807.61,559.55 808.38,562.17 809.16,564.72 809.94,567.20 810.71,569.62 811.49,571.96 812.27,574.24 813.04,576.46 813.82,578.61 814.60,580.70 815.37,582.73 816.15,584.69 816.93,586.60 817.70,588.45 818.48,590.25 819.26,591.99 820.03,593.67 820.81,595.30 821.58,596.88 822.36,598.41 823.14,599.89 823.91,601.32 824.69,602.70 825.47,604.04 826.24,605.33 827.02,606.58 827.80,607.78 828.57,608.94 829.35,610.06 830.13,611.14 830.90,612.18 831.68,613.18 832.46,614.14 833.23,615.07 834.01,615.96 834.79,616.82 835.56,617.64 836.34,618.43 837.12,619.19 837.89,619.92 838.67,620.62 839.45,621.29 840.22,621.94 841.00,622.55 841.77,623.14 842.55,623.70 843.33,624.24 844.10,624.75 844.88,625.25 845.66,625.71 846.43,626.16 847.21,626.58 847.99,626.99 848.76,627.37 849.54,627.74 850.32,628.09 851.09,628.42 851.87,628.73 852.65,629.03 853.42,629.31 854.20,629.58 854.98,629.83 855.75,630.07 856.53,630.29 857.31,630.50 858.08,630.70 858.86,630.89 859.64,631.07 860.41,631.23 861.19,631.39 861.96,631.53 862.74,631.67 863.52,631.80 864.29,631.91 865.07,632.03 865.85,632.13 866.62,632.22 867.40,632.31 868.18,632.40 868.95,632.47 869.73,632.54 870.51,632.61 871.28,632.67 872.06,632.72 872.84,632.77 873.61,632.82 874.39,632.86 875.17,632.90 875.94,632.93 876.72,632.96 877.50,632.99 878.27,633.02 879.05,633.04 879.83,633.06 880.60,633.08 881.38,633.10 882.15,633.11 882.93,633.13 883.71,633.14 884.48,633.15 885.26,633.16 886.04,633.16 886.81,633.17 887.59,633.17 888.37,633.18 889.14,633.18 889.92,633.19 890.70,633.19 891.47,633.19 892.25,633.19 893.03,633.20 893.80,633.20 894.58,633.20 895.36,633.20 896.13,633.20 896.91,633.20 897.69,633.20 898.46,633.20 899.24,633.20 900.02,633.20 900.79,633.20 901.57,633.20 902.34,633.20 903.12,633.20 903.90,633.20 904.67,633.20 905.45,633.20 906.23,633.20" fill="none" stroke="#E028E0" stroke-width="2" clip-path="url(#pc)" shape-rendering="crispEdges"/>
</svg>
<svg style="left:0;top:0" width="1174" height="731" shape-rendering="crispEdges">
<rect x="727.5" y="92.5" width="5" height="5" fill="none" stroke="#000" stroke-width="1"/>
<rect x="729.5" y="122.5" width="5" height="5" fill="none" stroke="#000" stroke-width="1"/>
<rect x="745.5" y="152.5" width="5" height="5" fill="none" stroke="#000" stroke-width="1"/>
<rect x="751.5" y="182.5" width="5" height="5" fill="none" stroke="#000" stroke-width="1"/>
<rect x="757.5" y="212.5" width="5" height="5" fill="none" stroke="#000" stroke-width="1"/>
<rect x="761.5" y="242.5" width="5" height="5" fill="none" stroke="#000" stroke-width="1"/>
<rect x="763.5" y="272.5" width="5" height="5" fill="none" stroke="#000" stroke-width="1"/>
<rect x="767.5" y="302.5" width="5" height="5" fill="none" stroke="#000" stroke-width="1"/>
<rect x="771.5" y="332.5" width="5" height="5" fill="none" stroke="#000" stroke-width="1"/>
<rect x="771.5" y="361.5" width="5" height="5" fill="none" stroke="#000" stroke-width="1"/>
<rect x="776.5" y="391.5" width="5" height="5" fill="none" stroke="#000" stroke-width="1"/>
<rect x="779.5" y="421.5" width="5" height="5" fill="none" stroke="#000" stroke-width="1"/>
<rect x="783.5" y="451.5" width="5" height="5" fill="none" stroke="#000" stroke-width="1"/>
<rect x="793.5" y="481.5" width="5" height="5" fill="none" stroke="#000" stroke-width="1"/>
<rect x="793.5" y="511.5" width="5" height="5" fill="none" stroke="#000" stroke-width="1"/>
<rect x="804.5" y="541.5" width="5" height="5" fill="none" stroke="#000" stroke-width="1"/>
<rect x="840.5" y="571.5" width="5" height="5" fill="none" stroke="#000" stroke-width="1"/>
<rect x="918.5" y="601.5" width="5" height="5" fill="none" stroke="#000" stroke-width="1"/>
</svg>
<svg style="left:0;top:0" width="1174" height="731" shape-rendering="crispEdges">
<line x1="569" y1="65" x2="569" y2="635" stroke="#000" stroke-width="2"/>
<line x1="568" y1="634" x2="1156" y2="634" stroke="#000" stroke-width="2"/>
<line x1="562" y1="65.5" x2="1156" y2="65.5" stroke="#000" stroke-width="1"/>
<line x1="1155.5" y1="65" x2="1155.5" y2="635" stroke="#000" stroke-width="1"/>
<line x1="562" y1="633.5" x2="568" y2="633.5" stroke="#000" stroke-width="1"/>
<rect x="1038.5" y="65.5" width="117" height="56" fill="#fff" stroke="#000" stroke-width="1"/>
</svg>
<span class="t" style="left:561.5px;top:577.84px;font-size:12px;color:#000;font-weight:normal;transform:translateX(-100%);">10</span>
<span class="t" style="left:561.5px;top:521.84px;font-size:12px;color:#000;font-weight:normal;transform:translateX(-100%);">20</span>
<span class="t" style="left:561.5px;top:464.84px;font-size:12px;color:#000;font-weight:normal;transform:translateX(-100%);">30</span>
<span class="t" style="left:561.5px;top:407.84px;font-size:12px;color:#000;font-weight:normal;transform:translateX(-100%);">40</span>
<span class="t" style="left:561.5px;top:350.84px;font-size:12px;color:#000;font-weight:normal;transform:translateX(-100%);">50</span>
<span class="t" style="left:561.5px;top:293.84px;font-size:12px;color:#000;font-weight:normal;transform:translateX(-100%);">60</span>
<span class="t" style="left:561.5px;top:236.84px;font-size:12px;color:#000;font-weight:normal;transform:translateX(-100%);">70</span>
<span class="t" style="left:561.5px;top:180.84px;font-size:12px;color:#000;font-weight:normal;transform:translateX(-100%);">80</span>
<span class="t" style="left:561.5px;top:123.84px;font-size:12px;color:#000;font-weight:normal;transform:translateX(-100%);">90</span>
<span class="t" style="left:544px;top:76.98px;font-size:14.5px;color:#000;font-weight:normal;transform:translateX(-100%);">100</span>
<span class="t" style="left:544px;top:627.98px;font-size:14.5px;color:#000;font-weight:normal;transform:translateX(-100%);">0</span>
<span class="t" style="left:642.5px;top:648.84px;font-size:12px;color:#000;font-weight:normal;transform:translateX(-50%);">-50</span>
<span class="t" style="left:715.5px;top:648.84px;font-size:12px;color:#000;font-weight:normal;transform:translateX(-50%);">0</span>
<span class="t" style="left:789.5px;top:648.84px;font-size:12px;color:#000;font-weight:normal;transform:translateX(-50%);">50</span>
<span class="t" style="left:862.5px;top:648.84px;font-size:12px;color:#000;font-weight:normal;transform:translateX(-50%);">100</span>
<span class="t" style="left:935.5px;top:648.84px;font-size:12px;color:#000;font-weight:normal;transform:translateX(-50%);">150</span>
<span class="t" style="left:1008.5px;top:648.84px;font-size:12px;color:#000;font-weight:normal;transform:translateX(-50%);">200</span>
<span class="t" style="left:1082.5px;top:648.84px;font-size:12px;color:#000;font-weight:normal;transform:translateX(-50%);">250</span>
<span class="t" style="left:568.5px;top:659.98px;font-size:14.5px;color:#000;font-weight:normal;">-100</span>
<span class="t" style="left:1155.5px;top:659.98px;font-size:14.5px;color:#000;font-weight:normal;transform:translateX(-100%);">300</span>
<span class="t" style="left:863px;top:675.32px;font-size:13.5px;color:#000;font-weight:bold;transform:translateX(-50%);">Col 2</span>
<span class="t" style="left:499px;top:345px;font-size:13px;font-weight:bold;transform:rotate(-90deg) translateX(-50%);transform-origin:0 0;">Probability (%)</span>
<span class="t" style="left:1044px;top:75.56px;font-size:12.8px;color:#22BB22;font-weight:normal;">Normal</span>
<span class="t" style="left:1044px;top:92.56px;font-size:12.8px;color:#DD2222;font-weight:normal;">Log-normal</span>
<span class="t" style="left:1044px;top:109.56px;font-size:12.8px;color:#E040E0;font-weight:normal;">Beta</span>
<div style="left:32px;top:711px;width:109px;height:16px;background:#D4D0C8;"></div>
<div style="left:32px;top:711px;width:109px;height:1px;background:#808080;"></div>
<div style="left:32px;top:711px;width:1px;height:16px;background:#808080;"></div>
<div style="left:32px;top:726px;width:109px;height:1px;background:#FFFFFF;"></div>
<div style="left:140px;top:711px;width:1px;height:16px;background:#FFFFFF;"></div>
<div style="left:143px;top:711px;width:1010px;height:16px;background:#FFFFFF;"></div>
<div style="left:143px;top:711px;width:1010px;height:1px;background:#808080;"></div>
<div style="left:143px;top:711px;width:1px;height:16px;background:#808080;"></div>
<svg style="left:1155px;top:713px" width="15" height="15"><path d="M13 2 L2 13 M13 6 L6 13 M13 10 L10 13" stroke="#808080" stroke-width="1.5"/><path d="M14 2.8 L2.8 14 M14 6.8 L6.8 14 M14 10.8 L10.8 14" stroke="#fff" stroke-width="0.8"/></svg>
</body></html>
